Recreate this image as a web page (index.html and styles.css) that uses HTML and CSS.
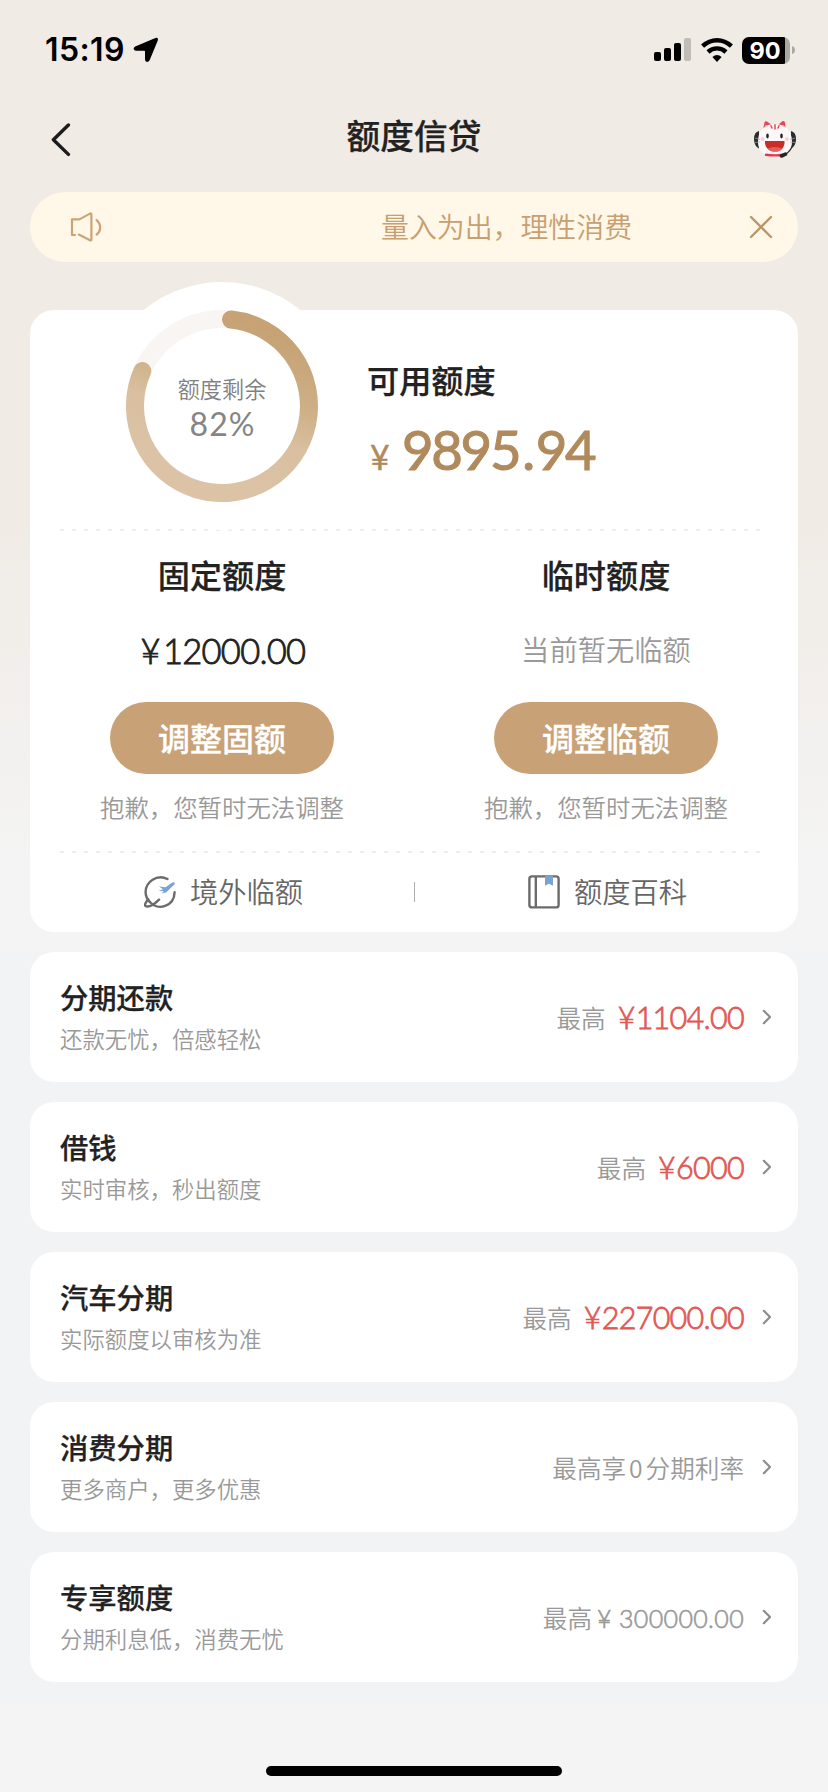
FILE: index.html
```html
<!DOCTYPE html>
<html lang="zh-CN">
<head>
<meta charset="utf-8">
<title>额度信贷</title>
<link rel="stylesheet" href="styles.css">
</head>
<body>
<div class="screen">
  <header class="status">
    <div class="status-left">
      <span class="clock">15:19</span>
      <svg class="locate" width="26" height="26" viewBox="0 0 26 26"><path d="M22.4 1 L2.2 9.4 Q0.4 10.4 .6 12 Q1.2 13.8 3 13.8 H11.4 Q12 13.8 12 14.4 V22.6 Q12.2 24.8 14 25 Q15.8 25 16.6 23.2 L24.8 3.4 Q25.4 1.6 24.4 .9 Q23.6 0.4 22.4 1Z"/></svg>
    </div>
    <div class="status-right">
      <svg width="38" height="24" viewBox="0 0 38 24"><rect x="0" y="14" width="7" height="9" rx="2"/><rect x="10" y="10" width="7" height="13" rx="2"/><rect x="20" y="5" width="7" height="18" rx="2"/><rect x="30" y="0" width="7" height="23" rx="2" fill="#c0bdb9"/></svg>
      <svg class="wifi" width="32" height="24" viewBox="0 0 32 24"><g fill="none" stroke="#000" stroke-width="4.4"><path d="M1.6 8.2 Q8 2.2 16 2.2 T30.4 8.2"/><path d="M7 14 Q11 10.4 16 10.4 T25 14"/></g><path d="M11.4 19 Q16 15 20.6 19 L16 24Z"/></svg>
      <div class="battery"><span class="battery-level">90</span></div>
      <svg class="battery-tip" width="3" height="8" viewBox="0 0 3 8"><path d="M0 0 Q3 1 3 4 T0 8Z" fill="#aba8a4"/></svg>
    </div>
  </header>

  <nav class="nav">
    <svg class="back" width="20" height="34" viewBox="0 0 20 34"><path d="M17.4 2 L2.4 16.8 L17.4 31.4" fill="none" stroke="#1c1c1c" stroke-width="3.4" stroke-linecap="round" stroke-linejoin="round"/></svg>
    <h1 class="nav-title">额度信贷</h1>
    <svg class="mascot" width="44" height="38" viewBox="0 0 44 38">
      <path d="M6 11 Q1 12 1 19 Q1 26 6 28.5Z" fill="#2b2c2f"/><path d="M38 11 Q43 12 43 19 Q43 26 38 28.5Z" fill="#2b2c2f"/>
      <path d="M10 10 L11.5 2.5 Q12 .6 14 1.4 L19 5Z" fill="#e2485c"/><path d="M33 10 L32 2.5 Q31 .4 29 1.4 L25 5Z" fill="#e2485c"/>
      <path d="M5 22 C5 10 12 4 22 4 S39 10 39 22 C39 32 31 36.5 22 36.5 S5 32 5 22Z" fill="#fcf8f7"/>
      <path d="M11 8 L12.5 5 L15 5.6Z" fill="#f7b3b6"/><path d="M28 5.6 L30.5 5 L32 8Z" fill="#f7b3b6"/>
      <path d="M18 5.8 L19 8 M22 4.8 V9 M26 5.8 L25 8" stroke="#e34a58" stroke-width="1.5" stroke-linecap="round"/>
      <ellipse cx="14.5" cy="16" rx="1.3" ry="2.4" fill="#222"/><ellipse cx="28.5" cy="16" rx="1.3" ry="2.4" fill="#222"/>
      <circle cx="9.5" cy="19" r="2" fill="#f8d2d2"/><circle cx="34" cy="19" r="2" fill="#f8d2d2"/>
      <path d="M12 21 H31.5 C32 27 28.5 31.6 22 31.6 S11.5 27 12 21Z" fill="#ca2c27"/><path d="M14.5 28.4 Q22 25.4 29.5 28.4 Q27 31.6 22 31.6 T14.5 28.4Z" fill="#e65d5b"/>
      <path d="M13 34.8 Q22 36 30 34.8" fill="none" stroke="#df3a50" stroke-width="2.4" stroke-linecap="round"/>
      <path d="M39.5 26 Q36 33 30 36" fill="none" stroke="#26272a" stroke-width="1.3"/><path d="M28.5 36 L32.5 34.2" stroke="#26272a" stroke-width="3.6" stroke-linecap="round"/>
      <path d="M2 18 L7 19.5 M2 22.5 L7 22 M42 18 L37 19.5 M42 22.5 L37 22" stroke="#aaa" stroke-width=".7"/>
    </svg>
  </nav>

  <div class="notice">
    <svg width="32" height="30" viewBox="0 0 32 30" fill="none" stroke="#cba475" stroke-width="2.2" stroke-linecap="round" stroke-linejoin="round"><path d="M5 23 H2 V7.4 H9.4 L20 1.6 Q21.4 1 21.4 2.6 V27.2 Q21.4 28.8 20 28.2 L8.8 22.6"/><path d="M26.6 8 C31.4 12.4 31.4 18.4 26.6 22.6"/></svg>
    <span class="notice-text">量入为出，理性消费</span>
    <svg width="24" height="24" viewBox="0 0 24 24" fill="none" stroke="#bd9568" stroke-width="2.4" stroke-linecap="round"><path d="M2 2 L22 22 M22 2 L2 22"/></svg>
  </div>

  <main class="card">
    <section class="summary">
      <div class="gauge">
        <svg width="192" height="192" viewBox="0 0 192 192" fill="none" stroke-width="18">
          <defs><linearGradient id="gold" x1=".6" y1="0" x2=".3" y2=".85"><stop offset="0" stop-color="#c6a275"/><stop offset=".4" stop-color="#ceaf86"/><stop offset=".65" stop-color="#d9bf9f"/><stop offset="1" stop-color="#dcc3a6"/></linearGradient></defs>
          <circle cx="96" cy="96" r="87" stroke="#f8f5f2"/>
          <path d="M105 9.5 A87 87 0 1 1 16.3 61.1" stroke="url(#gold)" stroke-linecap="round"/>
        </svg>
        <div class="gauge-text"><span class="gauge-label">额度剩余</span><span class="gauge-value">82%</span></div>
      </div>
      <div class="available">
        <h2 class="heading">可用额度</h2>
        <div class="total"><span class="total-sign">¥</span><span class="total-value">9895<span class="point">.</span>94</span></div>
      </div>
    </section>
    <div class="dashes"></div>
    <section class="limits">
      <div class="limit">
        <h2 class="heading">固定额度</h2>
        <p class="fixed-value"><span class="yen">¥</span>12000.00</p>
        <button class="adjust">调整固额</button>
        <p class="hint">抱歉，您暂时无法调整</p>
      </div>
      <div class="limit">
        <h2 class="heading">临时额度</h2>
        <p class="none-value">当前暂无临额</p>
        <button class="adjust">调整临额</button>
        <p class="hint">抱歉，您暂时无法调整</p>
      </div>
    </section>
    <div class="dashes"></div>
    <section class="links">
      <a class="link"><svg width="32" height="34" viewBox="0 0 32 34" fill="none" stroke="#6b6b6b" stroke-width="2.4" stroke-linecap="round"><path d="M23.5 4 C13-1.4 1.6 6.8 1.6 17 C1.6 21 3.4 24.4 5.6 26.8"/><path d="M4.2 24.2 C.8 28 .2 31 2.2 31.4 C5 32 10 29.6 15 24.6"/><path d="M5.6 26.8 C14 36.4 30.2 31.4 30.6 17.2"/><path d="M15 11.6 L21.4 12.2 L28.5 7.4 Q31.5 6.6 30.6 9.2 L22 17.6 L18 18.2 L19.6 16 L14.5 16 L19 14.2Z" fill="#7ba2d0" stroke="none"/></svg><span>境外临额</span></a>
      <i class="separator"></i>
      <a class="link"><svg width="32" height="34" viewBox="0 0 32 34" fill="none" stroke="#6b6b6b" stroke-width="2.4"><rect x="1.4" y="1.4" width="29.2" height="31" rx="2.5"/><path d="M7.8 1 V33"/><path d="M17 .5 H25 V10.8 L21 8.8 L17 10.8Z" fill="#7ba2d0" stroke="none"/></svg><span>额度百科</span></a>
    </section>
  </main>

  <section class="products">
    <a class="product"><div><h3 class="name">分期还款</h3><p class="desc">还款无忧，倍感轻松</p></div><span class="offer">最高</span><span class="amount"><span class="yen">¥</span>1104.00</span><svg class="chevron" viewBox="0 0 10 16"><path d="M1.8 1.8 L8 8 L1.8 14.2"/></svg></a>
    <a class="product"><div><h3 class="name">借钱</h3><p class="desc">实时审核，秒出额度</p></div><span class="offer">最高</span><span class="amount"><span class="yen">¥</span>6000</span><svg class="chevron" viewBox="0 0 10 16"><path d="M1.8 1.8 L8 8 L1.8 14.2"/></svg></a>
    <a class="product"><div><h3 class="name">汽车分期</h3><p class="desc">实际额度以审核为准</p></div><span class="offer">最高</span><span class="amount"><span class="yen">¥</span>227000.00</span><svg class="chevron" viewBox="0 0 10 16"><path d="M1.8 1.8 L8 8 L1.8 14.2"/></svg></a>
    <a class="product"><div><h3 class="name">消费分期</h3><p class="desc">更多商户，更多优惠</p></div><span class="offer">最高享<span class="zero">0</span>分期利率</span><svg class="chevron" viewBox="0 0 10 16"><path d="M1.8 1.8 L8 8 L1.8 14.2"/></svg></a>
    <a class="product"><div><h3 class="name">专享额度</h3><p class="desc">分期利息低，消费无忧</p></div><span class="offer">最高<span class="figure">¥ 300000.00</span></span><svg class="chevron" viewBox="0 0 10 16"><path d="M1.8 1.8 L8 8 L1.8 14.2"/></svg></a>
  </section>
  <footer class="home"><div class="home-bar"></div></footer>
</div>
</body>
</html>
```

FILE: styles.css
```css
* { box-sizing: border-box; margin: 0; padding: 0; }
body { font-family: "Noto Sans CJK SC", sans-serif; color: #222; }
h1, h2, h3 { font-weight: 500; -webkit-text-stroke: .25px currentColor; }
.screen {
  width: 828px; height: 1792px; overflow: hidden;
  display: flex; flex-direction: column;
  background: linear-gradient(#f0ebe5 0, #f0ebe5 520px, #f4f4f4 870px, #f4f4f4 100%);
}

.status { height: 96px; padding: 4px 33px 0 45px; display: flex; justify-content: space-between; align-items: center; }
.status-left, .status-right { display: flex; align-items: center; }
.status-left { padding-bottom: 1px; }
.clock { font: 600 32px/40px Inter, sans-serif; color: #000; letter-spacing: 0.4px; width: 88px; white-space: nowrap; }
.wifi { margin: 0 9px 0 9px; }
.battery { width: 48px; height: 27px; border-radius: 7px; overflow: hidden; background: linear-gradient(90deg, #000 43px, #aba8a4 43px); }
.battery-level { display: block; width: 46px; text-align: center; color: #fff; font: 700 23.5px/27px Inter, sans-serif; }
.battery-tip { margin-left: 2px; }

.nav { height: 96px; padding: 0 32px 0 51px; display: grid; grid-template-columns: 41px 1fr 60px; align-items: center; }
.back { margin-top: -8px; }
.nav-title { padding-bottom: 18px; text-align: center; font-size: 33.7px; line-height: 40px; }
.mascot { justify-self: end; margin-top: -10px; margin-right: -1px; }

.notice { height: 70px; margin: 0 30px; padding: 0 25px 0 40px; border-radius: 35px; background: #fff7e8; color: #c79f70; display: flex; align-items: center; }
.notice-text { flex: 1; padding-left: 279px; font-size: 27.9px; font-weight: 350; line-height: 40px; padding-bottom: 2px; white-space: nowrap; }

.card { height: 622px; margin: 48px 30px 20px; border-radius: 24px; background: #fff; }
.summary { height: 219px; display: flex; }
/* The white disc rises above the card's top edge. */
.gauge { width: 248px; height: 248px; margin: -28px 0 0 68px; padding: 28px; border-radius: 50%; background: #fff; display: grid; flex: none; }
.gauge > * { grid-area: 1 / 1; }
.gauge-text { display: flex; flex-direction: column; align-items: center; color: #858585; padding-top: 62px; }
.gauge-label { font-size: 22.2px; font-weight: 350; line-height: 32px; color: #808080; }
.gauge-value { font: 400 32px/38px Lato, sans-serif; letter-spacing: 1px; padding: 1px 0 0 1px; }
.available { padding: 48px 0 0 21px; }
.heading { font-size: 32.2px; line-height: 44px; margin-top: -1px; }
.total { display: flex; align-items: baseline; color: #b08a5c; margin-top: 13px; font-family: Lato, sans-serif; font-weight: 400; line-height: 70px; }
.total-sign { width: 35px; padding-left: 3px; font-size: 34px; -webkit-text-stroke: .4px #b08a5c; }
.total-value { font-size: 54.5px; letter-spacing: -2.3px; -webkit-text-stroke: 1.1px #b08a5c; }
.point { margin: 0 3px; }
.dashes { height: 2px; width: 700px; margin-left: 30px; background: repeating-linear-gradient(90deg, #ededed 0 4px, transparent 4px 12px); }

.limits { display: grid; grid-template-columns: 1fr 1fr; height: 320px; }
.limit { display: flex; flex-direction: column; align-items: center; padding-top: 22px; }
.fixed-value, .none-value { height: 44px; margin: 31px 0 31px; line-height: 44px; }
.fixed-value { font-family: Lato, sans-serif; font-size: 34.5px; font-weight: 300; -webkit-text-stroke: .9px #222; letter-spacing: -0.7px; padding: 2px 0 0 2px; }
.yen { margin-right: 3px; }
.none-value { color: #999; font-size: 28.3px; font-weight: 350; }
.adjust { width: 224px; height: 72px; border: 0; border-radius: 36px; background: #c8a276; color: #fff; font: 500 32px/40px "Noto Sans CJK SC", sans-serif; -webkit-text-stroke: .3px #fff; padding-bottom: 3px; }
.hint { margin-top: 15px; font-size: 24.4px; font-weight: 350; line-height: 36px; color: #999; }
.links { height: 78px; padding-left: 1px; display: grid; grid-template-columns: 383px 1px 383px; align-items: center; }
.link { display: flex; align-items: center; justify-content: center; gap: 14px; font-size: 28.3px; font-weight: 350; line-height: 40px; color: #666; padding-left: 2px; }
.link span { padding-bottom: 3px; }
.separator { height: 20px; background: #b0b0b0; }

.products { height: 752px; padding: 0 30px; background: #f2f3f5; display: flex; flex-direction: column; gap: 20px; }
.product { height: 130px; border-radius: 24px; background: #fff; padding: 0 26px 0 30px; display: flex; align-items: center; white-space: nowrap; }
.product > div { flex: 1; }
.name { font-size: 28.3px; line-height: 42px; }
.desc { font-size: 22.4px; line-height: 41px; font-weight: 350; color: #999; }
.offer { font-size: 24.6px; line-height: 36px; font-weight: 350; color: #999; }
.amount { margin-left: 12px; font: 300 30.5px/36px Lato, sans-serif; -webkit-text-stroke: .8px #e15954; letter-spacing: -0.7px; color: #e15954; }
.amount .yen { margin-right: 1px; }
.zero { margin: 0 3px; }
.figure { font-family: Lato, sans-serif; font-weight: 300; -webkit-text-stroke: .6px #999; font-size: 25px; letter-spacing: .35px; margin-left: 5px; }
.chevron { width: 10px; height: 16px; margin-left: 18px; fill: none; stroke: #8c8c8c; stroke-width: 2.2; stroke-linecap: round; stroke-linejoin: round; }

.home { flex: 1; display: flex; align-items: flex-end; justify-content: center; padding-bottom: 16px; }
.home-bar { width: 296px; height: 10px; border-radius: 5px; background: #000; }
```
